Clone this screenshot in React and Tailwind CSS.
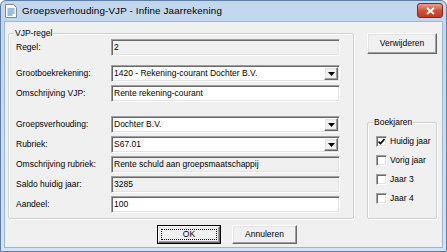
const sunken =
  "border border-t-[#a0a0a0] border-l-[#a0a0a0] border-r-white border-b-white shadow-[inset_1px_1px_0_#696969,inset_-1px_-1px_0_#e3e3e3]";
const raised =
  "border border-t-white border-l-white border-r-[#696969] border-b-[#696969] shadow-[inset_-1px_-1px_0_#a0a0a0,inset_1px_1px_0_#e3e3e3] bg-[#f0f0f0]";

function Field({ value, type = "text", className = "" }) {
  const bg = type === "readonly" ? "bg-[#f0f0f0]" : "bg-white";
  return (
    <div className={`${sunken} ${bg} h-[17px] w-[229px] flex items-center ${className}`}>
      <span className="pl-[2px] flex-1 truncate">{value}</span>
      {type === "combo" && (
        <div className={`${raised} w-[14px] h-[13px] mr-[1px] flex items-center justify-center`}>
          <svg width="7" height="4" viewBox="0 0 7 4">
            <path d="M0 0h7L3.5 4z" fill="#000" />
          </svg>
        </div>
      )}
    </div>
  );
}

function Row({ label, mt, children }) {
  return (
    <div className={`flex items-center ${mt}`}>
      <div className="w-[95px] shrink-0">{label}</div>
      {children}
    </div>
  );
}

function Checkbox({ label, checked }) {
  return (
    <div className="flex items-center h-[19px]">
      <div className={`${sunken} bg-white w-[11px] h-[11px] flex items-center justify-center`}>
        {checked && (
          <svg width="7" height="7" viewBox="0 0 7 7">
            <path d="M0.5 3.5l2 2 4-4.5" stroke="#000" strokeWidth="1.6" fill="none" />
          </svg>
        )}
      </div>
      <span className="ml-[3px]">{label}</span>
    </div>
  );
}

export default function App() {
  return (
    <div className="w-[447px] h-[252px] flex flex-col bg-gradient-to-b from-[#c2d6ee] to-[#d3e2f4] border border-[#5d7fa7] rounded-t-[6px] font-['Liberation_Sans',Arial,sans-serif] text-black overflow-hidden">
      {/* Title bar */}
      <div className="h-[20px] flex items-center relative shrink-0">
        <svg className="ml-[4px]" width="12" height="14" viewBox="0 0 12 14">
          <path d="M0.5 0.5h8l3 3v10h-11z" fill="#fff" stroke="#7a8aa0" />
          <path d="M2.5 5h7M2.5 7h7M2.5 9h7M2.5 11h5" stroke="#3d78c4" strokeWidth="1" />
        </svg>
        <span className="ml-[5px] text-[9.8px] tracking-[0.15px]">Groepsverhouding-VJP - Infine Jaarrekening</span>
        <div className="absolute right-[3px] top-[2px] w-[26px] h-[15px] rounded-[3px] border border-[#7c2d22] bg-gradient-to-b from-[#e8a190] via-[#d2533b] to-[#c23a22] flex items-center justify-center">
          <svg width="9" height="8" viewBox="0 0 9 8">
            <path d="M1 1l7 6M8 1l-7 6" stroke="#fff" strokeWidth="2" />
          </svg>
        </div>
      </div>

      {/* Client area */}
      <div className="mx-[3px] mb-[3px] flex-1 bg-[#f0f0f0] border border-[#9fb5d0] text-[8.5px] flex flex-col">
        <div className="flex pt-[11px] pl-[3px]">
          {/* VJP-regel group */}
          <div className="relative w-[346px] border border-[#d0d0d0] shadow-[inset_1px_1px_0_#fff,1px_1px_0_#fff] rounded-[2px] pl-[7px] pt-[5px] pb-[5px]">
            <span className="absolute -top-[6px] left-[5px] px-[1px] bg-[#f0f0f0] leading-[11px]">VJP-regel</span>
            <Row label="Regel:" mt="">
              <Field value="2" type="readonly" />
            </Row>
            <Row label="Grootboekrekening:" mt="mt-[9px]">
              <Field value="1420 - Rekening-courant Dochter B.V." type="combo" />
            </Row>
            <Row label="Omschrijving VJP:" mt="mt-[3px]">
              <Field value="Rente rekening-courant" />
            </Row>
            <Row label="Groepsverhouding:" mt="mt-[14px]">
              <Field value="Dochter B.V." type="combo" />
            </Row>
            <Row label="Rubriek:" mt="mt-[3px]">
              <Field value="S67.01" type="combo" />
            </Row>
            <Row label="Omschrijving rubriek:" mt="mt-[3px]">
              <Field value="Rente schuld aan groepsmaatschappij" type="readonly" />
            </Row>
            <Row label="Saldo huidig jaar:" mt="mt-[3px]">
              <Field value="3285" type="readonly" />
            </Row>
            <Row label="Aandeel:" mt="mt-[3px]">
              <Field value="100" />
            </Row>
          </div>

          {/* Right column */}
          <div className="ml-[13px] w-[70px] flex flex-col">
            <button className={`${raised} h-[21px] w-[70px] flex items-center justify-center`}>
              Verwijderen
            </button>
            <div className="relative mt-[68px] flex-1 border border-[#d0d0d0] shadow-[inset_1px_1px_0_#fff,1px_1px_0_#fff] rounded-[2px] pl-[8px] pt-[9px]">
              <span className="absolute -top-[6px] left-[5px] px-[1px] bg-[#f0f0f0] leading-[11px]">Boekjaren</span>
              <Checkbox label="Huidig jaar" checked />
              <Checkbox label="Vorig jaar" />
              <Checkbox label="Jaar 3" />
              <Checkbox label="Jaar 4" />
            </div>
          </div>
        </div>

        {/* Bottom buttons */}
        <div className="flex mt-[6px] ml-[152px]">
          <button className="h-[19px] w-[64px] border border-black bg-[#f0f0f0] p-0">
            <div className={`${raised} relative h-full w-full flex items-center justify-center`}>
              <div className="absolute inset-[2px] border border-dotted border-black" />
              <span>OK</span>
            </div>
          </button>
          <button className={`${raised} ml-[11px] h-[19px] w-[65px] flex items-center justify-center`}>
            Annuleren
          </button>
        </div>
      </div>
    </div>
  );
}
